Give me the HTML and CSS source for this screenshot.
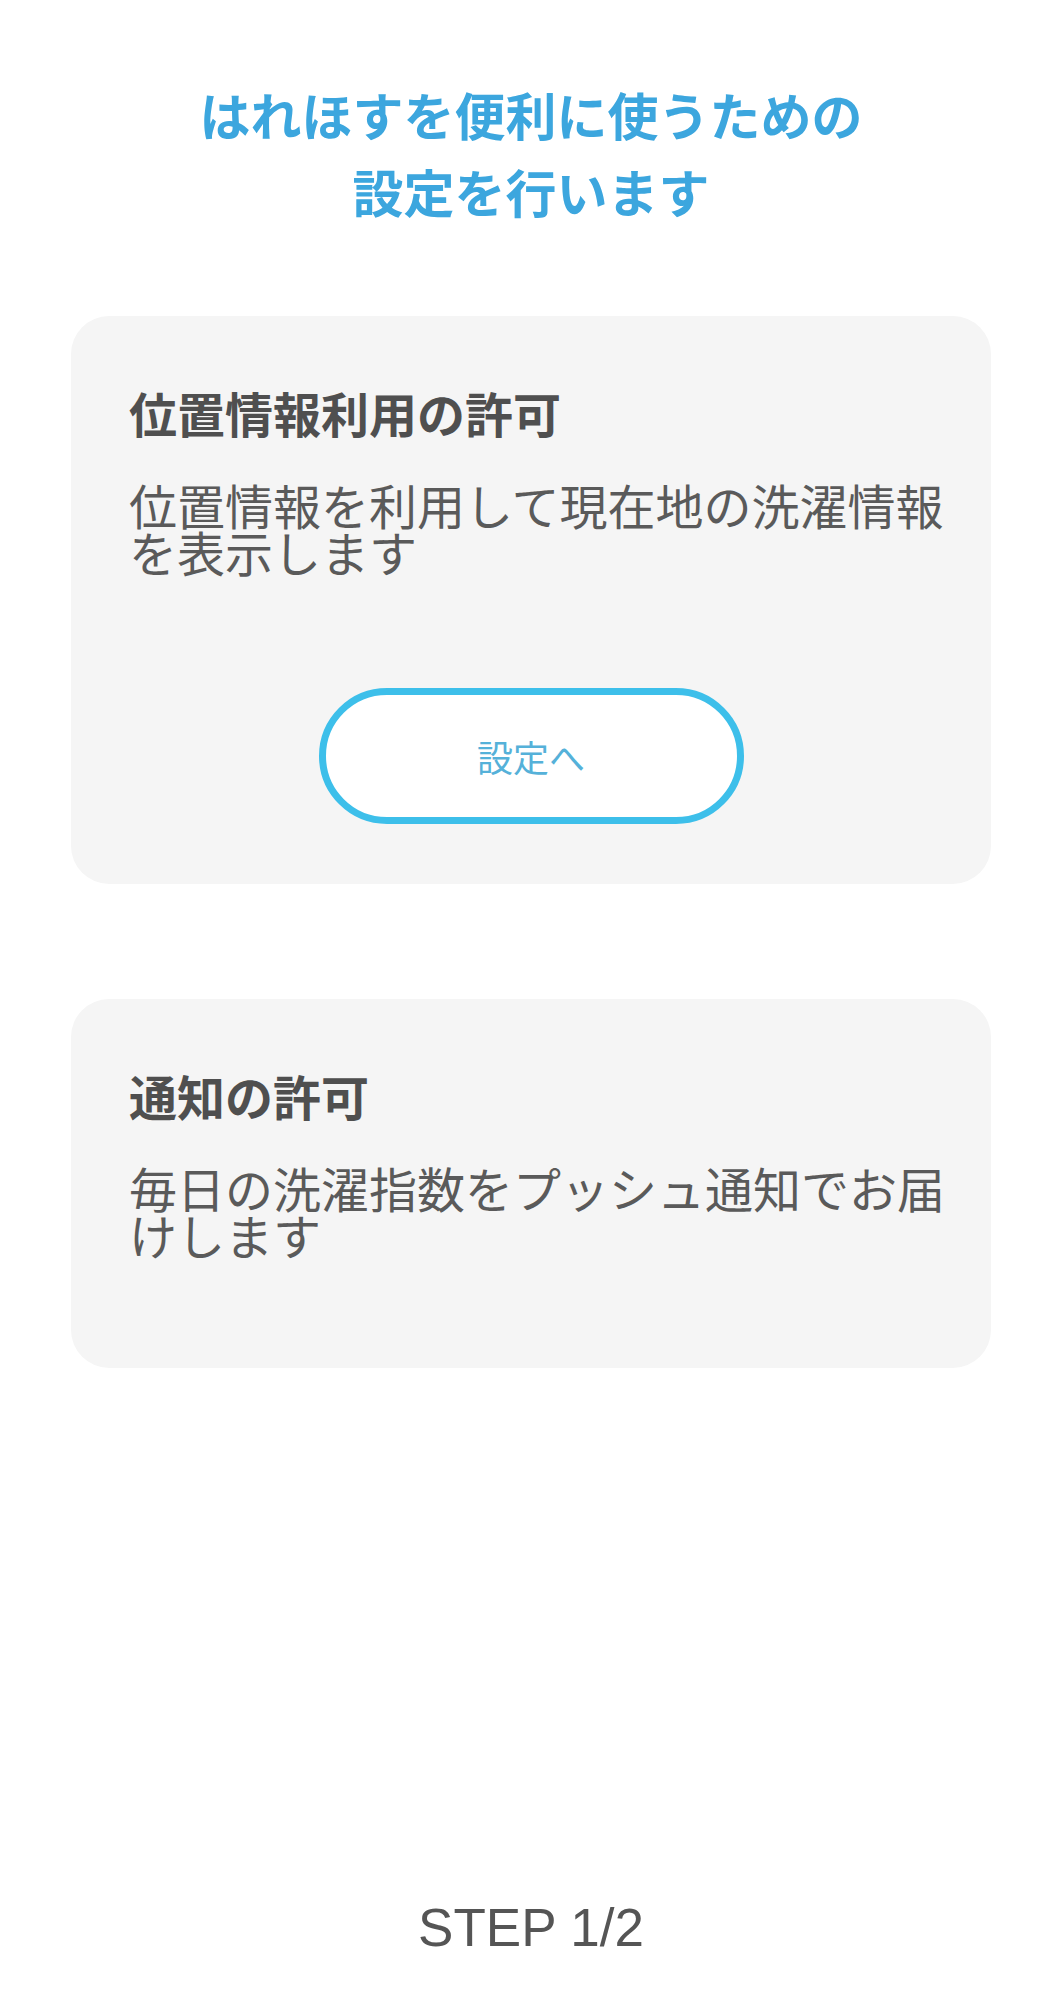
FILE: index.html
```html
<!DOCTYPE html>
<html lang="ja">
<head>
  <meta charset="UTF-8">
  <meta name="viewport" content="width=device-width, initial-scale=1.0">
  <title>初期設定 - はれほす</title>
  <link rel="stylesheet" href="styles.css">
</head>
<body>
  <div class="page">
    <h1 class="lead">はれほすを便利に使うための<br>設定を行います</h1>

    <div class="card">
      <h2 class="card-title">位置情報利用の許可</h2>
      <p class="card-text">位置情報を利用して現在地の洗濯情報を表示します</p>
      <div class="card-action">
        <button class="setting-btn">設定へ</button>
      </div>
    </div>

    <div class="card card-plain">
      <h2 class="card-title">通知の許可</h2>
      <p class="card-text">毎日の洗濯指数をプッシュ通知でお届けします</p>
    </div>

    <div class="step">STEP 1/2</div>
  </div>
</body>
</html>
```

FILE: styles.css
```css
* {
  box-sizing: border-box;
}
body {
  margin: 0;
  background: #fff;
  font-family: "Noto Sans CJK JP", "Noto Sans", sans-serif;
  color: #555;
}
.page {
  min-height: 100vh;
  display: flex;
  flex-direction: column;
  padding: 76px 71px 41px;
}
.lead {
  margin: 0;
  color: #3ca6de;
  font-size: 51px;
  line-height: 77px;
  font-weight: bold;
  text-align: center;
}
.card {
  margin-top: 86px;
  background: #f5f5f5;
  border-radius: 38px;
  padding: 68px 58px 60px;
}
.card + .card {
  margin-top: 115px;
}
.card-plain {
  padding-bottom: 110px;
}
.card-title {
  margin: 0;
  font-size: 48px;
  line-height: 56px;
  font-weight: bold;
  color: #4f4f4f;
}
.card-text {
  margin: 41px -20px 0 0;
  font-size: 48px;
  line-height: 47px;
  font-weight: normal;
  color: #5a5a5a;
}
.card-action {
  margin-top: 113px;
  display: flex;
  justify-content: center;
}
.setting-btn {
  width: 425px;
  height: 136px;
  border: 7px solid #3dbfea;
  border-radius: 68px;
  background: #fff;
  color: #55b1d9;
  font-family: inherit;
  font-size: 36px;
  cursor: pointer;
}
.step {
  margin-top: auto;
  text-align: center;
  font-family: "Liberation Sans", Arial, sans-serif;
  font-size: 53px;
  line-height: 60px;
  color: #555;
}
```
